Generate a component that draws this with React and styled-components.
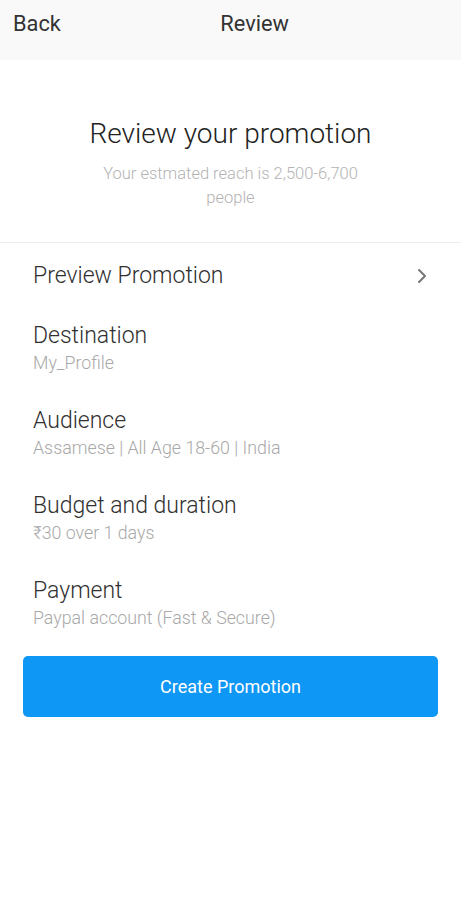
import React from "react";
import styled, { createGlobalStyle } from "styled-components";

const Global = createGlobalStyle`
  html, body { margin: 0; padding: 0; background: #fff; }
  body { font-family: Roboto, "Noto Sans", Arial, sans-serif; -webkit-font-smoothing: antialiased; }
  * { box-sizing: border-box; }
`;

const Page = styled.div`
  width: 461px;
  min-height: 900px;
  background: #fff;
  display: flex;
  flex-direction: column;
`;

const Header = styled.header`
  height: 60px;
  background: #f9f9f9;
  display: flex;
  align-items: flex-start;
  justify-content: space-between;
  padding: 11px 172px 0 13px;
`;

const HeaderText = styled.span`
  font-size: 21.8px;
  line-height: 26px;
  color: #333;
`;

const Intro = styled.section`
  display: flex;
  flex-direction: column;
  align-items: center;
  padding: 58px 0 32px;
  border-bottom: 1px solid #ececec;
`;

const Title = styled.h1`
  margin: 0;
  font-size: 28px;
  line-height: 32px;
  font-weight: 300;
  color: #222;
`;

const Sub = styled.p`
  margin: 12px 0 0;
  width: 290px;
  text-align: center;
  font-size: 16.5px;
  line-height: 24px;
  font-weight: 300;
  color: #b3b3b3;
`;

const List = styled.div`
  display: flex;
  flex-direction: column;
  gap: 33px;
  padding: 20px 33px 0;
`;

const Row = styled.div`
  height: 26px;
  display: flex;
  align-items: center;
  justify-content: space-between;
`;

const Item = styled.div`
  display: flex;
  flex-direction: column;
  gap: 2px;
`;

const ItemTitle = styled.div`
  font-size: 23px;
  line-height: 28px;
  font-weight: 300;
  color: #303030;
`;

const ItemSub = styled.div`
  font-size: 17.8px;
  line-height: 22px;
  font-weight: 300;
  color: #a8a8a8;
`;

const Button = styled.button`
  margin: 27px 23px 0;
  height: 61px;
  border: none;
  border-radius: 5px;
  background: #0f97f6;
  color: #fff;
  font-family: Roboto, "Noto Sans", Arial, sans-serif;
  font-size: 18px;
  font-weight: 400;
`;

const Chevron = () => (
  <svg width="12" height="18" viewBox="0 0 12 18">
    <path d="M3 3 L9 9 L3 15" fill="none" stroke="#777" strokeWidth="2" strokeLinecap="round" strokeLinejoin="round" />
  </svg>
);

const items = [
  { title: "Destination", sub: "My_Profile" },
  { title: "Audience", sub: "Assamese | All Age 18-60 | India" },
  { title: "Budget and duration", sub: "₹30 over 1 days" },
  { title: "Payment", sub: "Paypal account (Fast & Secure)" },
];

export default function App() {
  return (
    <Page>
      <Global />
      <Header>
        <HeaderText>Back</HeaderText>
        <HeaderText>Review</HeaderText>
      </Header>
      <Intro>
        <Title>Review your promotion</Title>
        <Sub>Your estmated reach is 2,500-6,700 people</Sub>
      </Intro>
      <List>
        <Row>
          <ItemTitle>Preview Promotion</ItemTitle>
          <Chevron />
        </Row>
        {items.map((it) => (
          <Item key={it.title}>
            <ItemTitle>{it.title}</ItemTitle>
            <ItemSub>{it.sub}</ItemSub>
          </Item>
        ))}
      </List>
      <Button>Create Promotion</Button>
    </Page>
  );
}
